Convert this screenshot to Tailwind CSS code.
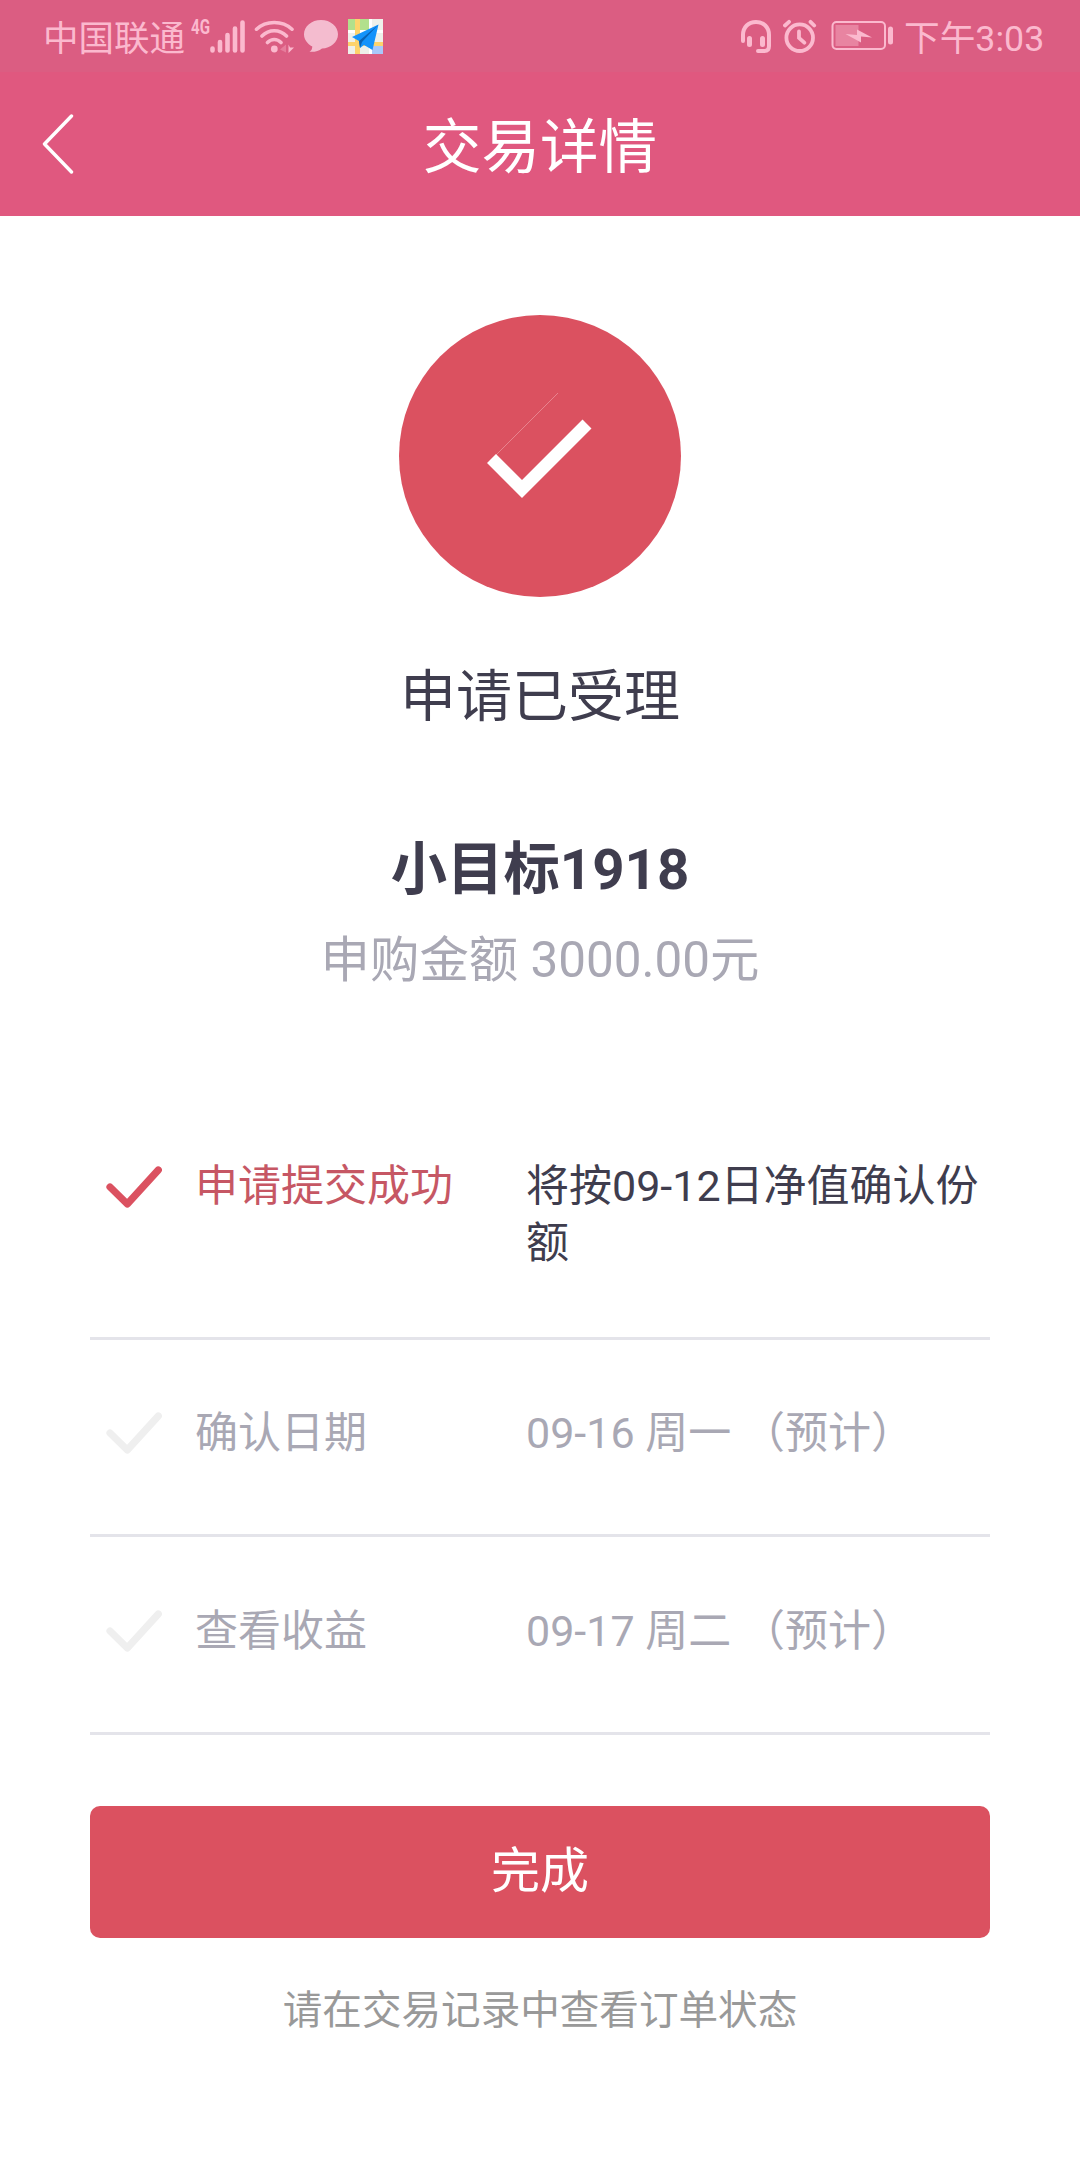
<!DOCTYPE html>
<html lang="zh-CN">
<head>
  <meta charset="UTF-8" />
  <meta name="viewport" content="width=device-width, initial-scale=1.0"/>
  <title>交易详情</title>
  <script src="https://cdn.jsdelivr.net/npm/@tailwindcss/browser@4"></script>
</head>

<body class="bg-white font-[Roboto,'Noto_Sans_CJK_SC',sans-serif]">
<div class="w-[1080px] h-[2160px] overflow-hidden flex flex-col">

  <!-- Status bar -->
  <div class="h-[72px] bg-[#db5d82] text-[#fbb9ce] flex items-center justify-between pl-[43px] pr-[36px] shrink-0">
    <div class="flex items-center h-full">
      <span class="text-[35.500px] leading-[72px] pt-[5px] w-[143px] whitespace-nowrap">中国联通</span>
      <span class="text-[21px] font-bold leading-none w-[24px] ml-[5px] mb-[18px] whitespace-nowrap"><span class="inline-block origin-left scale-x-[0.72]">4G</span></span>
      <svg class="w-[36px] h-[34px] -ml-[5px]" viewBox="210 18 36 34" fill="none" stroke="currentColor" stroke-width="4.6" stroke-linecap="round">
        <path d="M212.500 47.500v2M220 41v8.500M227.500 34v15.500M235 27.500v22M242.500 21.500v28"/>
      </svg>
      <svg class="w-[40px] h-[34px] ml-[8px]" viewBox="254 18 40 34" fill="none" stroke="currentColor" stroke-width="3.600" stroke-linecap="round">
        <path d="M256.500 28.200C266 19.200 282.500 19.200 292 28.200M262 35C269 28 279.500 28 286.500 35M267.500 41.500C271.500 37.500 277 37.500 281 41.500"/>
        <circle cx="274.300" cy="48" r="3.400" fill="currentColor" stroke="none"/>
        <path d="M286 43.500v8l-6-3z" fill="currentColor" stroke="none" opacity=".35"/>
        <path d="M288.500 43.500l1.500 3h4l-5.500 5.500z" fill="currentColor" stroke="none"/>
      </svg>
      <svg class="w-[34px] h-[34px] ml-[10px]" viewBox="304 20 34 34" fill="#f4bccf">
        <path d="M321 21c9.500 0 17 6.300 17 14.300s-7.500 14.200-16 14.200c-3 2.500-7 3.600-12.500 3.300 2-1.300 2.600-2.700 2.800-5.300-5-2.500-8.300-7-8.300-12.200C304 27.300 311.500 21 321 21z"/>
      </svg>
      <svg class="w-[35px] h-[35px] ml-[10px]" viewBox="0 0 35 35">
        <path fill="#eef0ea" d="M0 0h35v35H0z"/>
        <path fill="#b2e08c" d="M0 0h21v11H0z"/>
        <path fill="#fff" d="M0 11h35v3H0zM21 0h3v35h-3z"/>
        <path fill="#a9c8fb" d="M24 27h11v8H24z"/>
        <path fill="#fdd36c" d="M7 0h5v35H7zM0 23h35v4H0z"/>
        <path fill="#1493fb" d="M30.500 5.500L4 18l7 4 1 7 4-3 8.500 5z"/>
        <path fill="#0b62b4" d="M30 6L11 22l1 7 2-6z"/>
      </svg>
    </div>
    <div class="flex items-center h-full">
      <svg class="w-[32px] h-[34px]" viewBox="740 19 32 34" fill="none" stroke="currentColor" stroke-width="4" stroke-linecap="round">
        <path d="M743 41v-6c0-8 5.500-13 13-13s13 5 13 13v11c0 3.500-1.500 5-4.500 5H758"/>
        <path d="M749.500 38.500v6M762.500 38.500v6" stroke-width="5"/>
      </svg>
      <svg class="w-[34px] h-[34px] ml-[11px]" viewBox="783 19 34 34" fill="none" stroke="currentColor" stroke-width="3.800" stroke-linecap="round">
        <circle cx="799.700" cy="37.700" r="13.300"/>
        <path d="M799 31.500v6.500l5.300 4.700M785 25.500l4-3.700M810.500 21.800l3.700 3.700"/>
      </svg>
      <svg class="w-[62px] h-[30px] ml-[14px]" viewBox="831 22 62 30" fill="none" stroke="currentColor" stroke-width="2">
        <rect x="832.500" y="23" width="52.500" height="27" rx="4"/>
        <path d="M835.500 26h23v21h-23z" fill="currentColor" stroke="none" opacity=".42"/>
        <path d="M845.500 35l11.500 1v-5.500l15 8-11-1v6z" fill="currentColor" stroke="none"/>
        <rect x="888" y="27.500" width="5" height="18" rx="2.500" fill="currentColor" stroke="none"/>
      </svg>
      <span class="text-[35.700px] leading-[72px] pt-[5px] ml-[11px] w-[140px] whitespace-nowrap">下午3:03</span>
    </div>
  </div>

  <!-- Title bar -->
  <div class="h-[144px] bg-[#e0587f] text-white grid grid-cols-[120px_1fr_120px] items-center shrink-0">
    <svg class="w-[32px] h-[60px] ml-[42px]" viewBox="0 0 32 60" fill="none" stroke="#fff" stroke-width="3.400" stroke-linecap="round" stroke-linejoin="round">
      <path d="M29.500 2L2.500 30l27 28"/>
    </svg>
    <h1 class="text-center text-[58.600px] leading-[80px] pt-[7px]">交易详情</h1>
  </div>

  <!-- Result -->
  <div class="flex flex-col items-center pt-[99px] text-[#3f3d4e]">
    <svg class="w-[282px] h-[282px]" viewBox="0 0 282 282">
      <circle cx="141" cy="141" r="141" fill="#db5160"/>
      <path d="M97 140L159 78" stroke="#e8838e" stroke-width="1"/>
      <path d="M92.500 143.500l30.500 30.500L188 109" fill="none" stroke="#fff" stroke-width="12.700"/>
    </svg>
    <p class="text-[56px] leading-[80px] mt-[60px]">申请已受理</p>
    <p class="text-[56.400px] leading-[80px] mt-[93px] font-bold">小目标1918</p>
    <p class="text-[49.400px] leading-[70px] mt-[15px] text-[#a9a8b4]">申购金额 3000.00元</p>
  </div>

  <!-- Progress -->
  <div class="mx-[90px] mt-[114px] text-[43px] leading-[57px] text-[#a9a8b4]">
    <div class="h-[231px] pt-[49px] border-b-3 border-[#e4e4ea] flex items-start">
      <svg class="w-[56px] h-[42px] ml-[16px] mt-[8px]" viewBox="0 0 56 42" fill="none" stroke="#db5160" stroke-width="7.200" stroke-linecap="round" stroke-linejoin="round"><path d="M4 21l17.300 17L52.300 4"/></svg>
      <span class="ml-[33px] w-[331px] text-[#c65764]">申请提交成功</span>
      <span class="flex-1 -mr-px text-[#3f3d4e]">将按09-12日净值确认份额</span>
    </div>
    <div class="h-[197px] pt-[65px] border-b-3 border-[#e4e4ea] flex items-start">
      <svg class="w-[56px] h-[42px] ml-[16px] mt-[7px]" viewBox="0 0 56 42" fill="none" stroke="#efefef" stroke-width="7.200" stroke-linecap="round" stroke-linejoin="round"><path d="M4 21l17.300 17L52.300 4"/></svg>
      <span class="ml-[33px] w-[331px]">确认日期</span>
      <span class="flex-1">09-16 周一 （预计）</span>
    </div>
    <div class="h-[198px] pt-[66px] border-b-3 border-[#e4e4ea] flex items-start">
      <svg class="w-[56px] h-[42px] ml-[16px] mt-[7px]" viewBox="0 0 56 42" fill="none" stroke="#efefef" stroke-width="7.200" stroke-linecap="round" stroke-linejoin="round"><path d="M4 21l17.300 17L52.300 4"/></svg>
      <span class="ml-[33px] w-[331px]">查看收益</span>
      <span class="flex-1">09-17 周二 （预计）</span>
    </div>
  </div>

  <button class="mx-[90px] mt-[71px] h-[132px] rounded-[10px] bg-[#db5160] text-white text-[49px] shrink-0">完成</button>
  <p class="mt-[43px] text-center text-[39.600px] leading-[60px] text-[#999]">请在交易记录中查看订单状态</p>
</div>
</body>
</html>
